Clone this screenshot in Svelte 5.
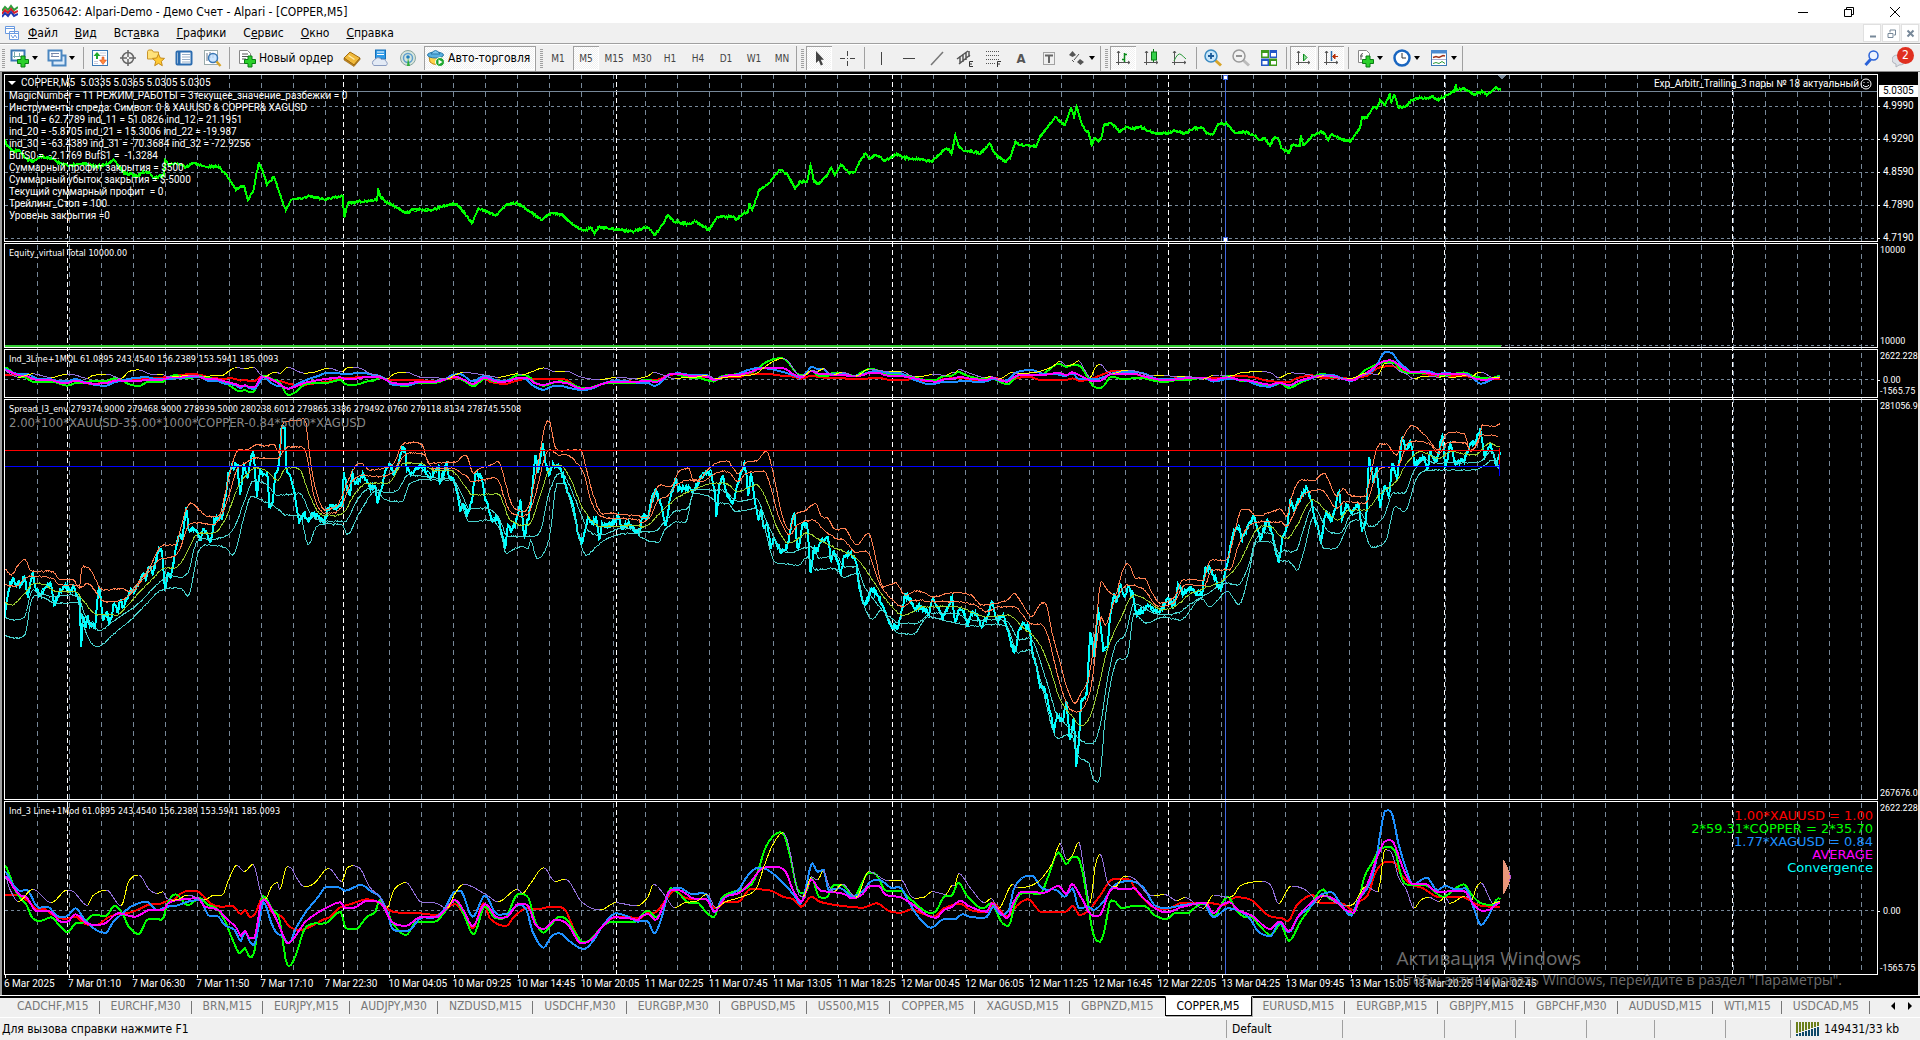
<script lang="ts">
  // Terminal window: menu, toolbars, five stacked chart panes, chart tabs, status bar.

  type Pt = [number, number];

  const W = 1872;
  const menu = [['', 'Ф', 'айл'], ['', 'В', 'ид'], ['Вст', 'а', 'вка'], ['', 'Г', 'рафики'], ['С', 'е', 'рвис'], ['', 'О', 'кно'], ['', 'С', 'правка']];
  const frames = ['M1', 'M5', 'M15', 'M30', 'H1', 'H4', 'D1', 'W1', 'MN'];
  const tabs = [
    'CADCHF,M15', 'EURCHF,M30', 'BRN,M15', 'EURJPY,M15', 'AUDJPY,M30', 'NZDUSD,M15', 'USDCHF,M30',
    'EURGBP,M30', 'GBPUSD,M5', 'US500,M15', 'COPPER,M5', 'XAGUSD,M15', 'GBPNZD,M15', 'COPPER,M5',
    'EURUSD,M15', 'EURGBP,M15', 'GBPJPY,M15', 'GBPCHF,M30', 'AUDUSD,M15', 'WTI,M15', 'USDCAD,M5',
  ];
  const activeTab = 13;
  const times = [
    '6 Mar 2025', '7 Mar 01:10', '7 Mar 06:30', '7 Mar 11:50', '7 Mar 17:10', '7 Mar 22:30', '10 Mar 04:05',
    '10 Mar 09:25', '10 Mar 14:45', '10 Mar 20:05', '11 Mar 02:25', '11 Mar 07:45', '11 Mar 13:05',
    '11 Mar 18:25', '12 Mar 00:45', '12 Mar 06:05', '12 Mar 11:25', '12 Mar 16:45', '12 Mar 22:05',
    '13 Mar 04:25', '13 Mar 09:45', '13 Mar 15:05', '13 Mar 20:25', '14 Mar 02:45',
  ];
  const comment = [
    'MagicNumber = 11 РЕЖИМ_РАБОТЫ = 3текущее_значение_разбежки = 0',
    'Инструменты спреда: Символ: 0 & XAUUSD & COPPER& XAGUSD',
    'ind_10 = 62.7789 ind_11 = 51.0826 ind_12 = 21.1951',
    'ind_20 = -5.8705 ind_21 = 15.3006 ind_22 = -19.987',
    'ind_30 = -63.4389 ind_31 = -70.3684 ind_32 = -72.9256',
    'BufS0 =  -2.1769 BufS1 =  -1.3284',
    'Суммарный профит закрытия = $500',
    'Суммарный убыток закрытия = $-5000',
    'Текущий суммарный профит  = 0',
    'Трейлинг_Стоп = 100',
    'Уровень закрытия =0',
  ];
  const gridX = Array.from({ length: 58 }, (_, i) => 32.5 + i * 32);
  const days = [62.5, 338.5, 611.5, 887.5, 1163.5, 1439.5, 1727.5];
  const priceAxis = [['4.9990', 31], ['4.9290', 64], ['4.8590', 97], ['4.7890', 130], ['4.7190', 163]] as [string, number][];

  // A block of recorded samples: x0 and k place it in time, y0 in the pane.
  function block(x0: number, k: number, y0: number, s: string): Pt[] {
    return s.trim().split(/\s+/).map((p) => {
      const [x, y] = p.split(',').map(Number);
      return [x0 - 5 + x / k, y0 + y / 3];
    });
  }

  const poly = (pts: Pt[]) => pts.map((p) => `${p[0].toFixed(1)},${p[1].toFixed(1)}`).join(' ');

  // Walk between the samples bar by bar with a small tick noise.
  function ticks(pts: Pt[], amp: number, seed: number): Pt[] {
    let r = seed;
    const rnd = () => ((r = (r * 16807) % 2147483647) / 2147483647) * 2 - 1;
    const out: Pt[] = [];
    for (let i = 1; i < pts.length; i++) {
      const [ax, ay] = pts[i - 1];
      const [bx, by] = pts[i];
      for (let x = ax; x < bx; x += 1) {
        out.push([x, ay + ((by - ay) * (x - ax)) / (bx - ax) + (x === ax ? 0 : rnd() * amp)]);
      }
    }
    out.push(pts[pts.length - 1]);
    return out;
  }

  // Averaged lines bend softly: cubic steps of two pixels between samples.
  function smooth(pts: Pt[]): Pt[] {
    const n = pts.length - 1;
    const slope = pts.map((_, i) => {
      const a = pts[Math.max(0, i - 1)];
      const b = pts[Math.min(n, i + 1)];
      const c = pts[i];
      if ((c[1] - a[1]) * (b[1] - c[1]) <= 0) return 0;
      return (b[1] - a[1]) / Math.max(1, b[0] - a[0]);
    });
    const out: Pt[] = [];
    for (let i = 0; i < n; i++) {
      const [ax, ay] = pts[i];
      const [bx, by] = pts[i + 1];
      const h = bx - ax;
      for (let x = ax; x < bx; x += 2) {
        const t = (x - ax) / h;
        const u = 1 - t;
        out.push([
          Math.round(x * 10) / 10,
          ay * u * u * (1 + 2 * t) + by * t * t * (3 - 2 * t) + h * t * u * (slope[i] * u - slope[i + 1] * t),
        ]);
      }
    }
    out.push(pts[n]);
    return out;
  }

  // Rising and falling parts of the convergence line have their own colours.
  function split(pts: Pt[], up: boolean): string {
    let d = '';
    for (let i = 1; i < pts.length; i++) {
      if (pts[i][1] <= pts[i - 1][1] === up) d += `M${pts[i - 1].join(' ')}L${pts[i].join(' ')}`;
    }
    return d;
  }

  const price = [
    ...block(0, 2.904, -75, '14,420 20,435 30,445 40,455 55,450 75,475 95,485 115,470 150,475 175,490 200,497 240,490 280,500 310,492 330,478 345,500 360,518 400,528 415,515 435,520 445,535 475,525 480,480 490,495 510,490 540,500 560,490 600,500 635,500 655,520 670,545 685,570 700,560 710,560 720,600 735,575 745,520 752,490 762,510 775,555 795,530 805,560 818,600 830,630 845,600 870,595 900,588 940,598 995,588 1000,650 1010,610 1050,605 1095,600 1098,565 1105,590 1120,605 1150,620 1180,640 1200,628 1250,632 1280,620 1325,612 1350,640 1370,670 1390,625 1440,645 1470,615 1500,610 1520,620'),
    ...block(530, 2.904, -75, '0,635 35,660 60,640 95,645 120,670 150,690 180,685 187,702 200,680 250,688 300,695 340,680 362,705 385,675 400,645 420,665 460,672 480,665 520,690 545,650 585,650 600,658 620,640 633,635 637,610 645,630 660,590 665,570 690,555 705,535 725,510 745,520 770,565 785,545 805,545 815,495 825,545 840,550 860,530 875,505 885,525 903,495 930,520 945,515 960,480 975,462 985,475 1005,465 1030,482 1065,462 1085,472 1140,480 1168,485 1175,475 1210,445 1225,460 1235,405 1245,440 1260,452 1310,460 1335,430 1350,462 1380,485 1395,470 1410,425 1420,435 1470,438 1480,412 1500,385 1525,352 1553,375 1567,335'),
    ...block(1060, 3, -75, '33,325 42,350 50,320 65,370 75,390 85,395 95,435 105,415 115,425 125,410 132,375 155,370 180,395 200,380 220,388 240,380 285,400 320,400 345,393 375,400 400,385 430,385 440,400 460,402 475,372 500,370 525,400 550,395 580,405 600,420 615,415 630,437 645,410 655,415 665,445 688,458 695,435 720,435 722,405 730,435 760,405 790,395 805,420 815,403 840,415 870,425 885,405 900,385 907,350 920,355 940,320 950,325 960,300 975,315 990,280 993,310 1003,285 1015,322 1035,322 1055,300 1085,292 1105,296 1115,288 1130,300 1155,290 1185,272 1187,252 1190,270 1210,265 1240,283 1270,275 1280,285 1310,262 1323,272'),
  ];

  const spreadBlocks = (a: string, b: string, c: string) => [
    ...block(0, 2.45, -60, a), ...block(640, 2.45, -60, b), ...block(1200, 2.178, -60, c),
  ];
  const spread = spreadBlocks(
    '12,830 20,755 32,712 38,735 45,725 50,738 60,712 68,775 80,695 88,750 98,765 110,745 118,730 125,735 133,795 145,760 160,742 168,745 172,760 180,740 190,770 195,778 199,920 203,830 210,865 215,825 220,860 228,848 232,865 243,738 253,840 262,815 268,852 280,790 288,820 295,780 302,800 318,755 330,755 340,730 352,700 358,720 365,680 375,700 390,625 397,632 404,745 412,700 418,715 430,630 440,580 447,600 456,500 462,570 480,570 490,600 500,565 515,610 525,540 545,530 560,400 570,380 582,375 588,465 598,370 606,415 620,330 625,400 630,465 638,390 645,405 655,400 660,500 668,485 675,400 683,375 690,262 697,262 702,385 720,450 733,550 745,520 755,540 770,520 795,550 803,505 820,500 840,490 842,395 852,450 858,465 863,395 872,430 890,402 905,440 920,440 924,490 935,445 945,390 955,370 965,400 975,375 985,325 993,330 997,390 1010,400 1030,375 1055,410 1075,380 1077,430 1095,370 1100,410 1115,430 1122,470 1128,515 1135,490 1145,525 1155,490 1165,400 1180,410 1190,480 1205,540 1220,535 1238,625 1245,555 1252,575 1265,545 1275,480 1285,590 1300,500 1312,345 1318,400 1330,310 1337,375 1345,405 1355,370 1375,390 1385,430 1392,460 1405,500 1415,580 1428,605 1440,530 1450,550 1460,530 1468,600 1475,550 1490,560 1515,530 1525,570 1540,545 1555,575 1567,575',
    '5,530 20,535 28,480 40,450 50,490 63,555 75,470 87,415 95,450 120,440 130,455 150,410 165,395 175,400 183,450 187,530 195,430 203,405 212,460 227,490 240,430 255,370 260,390 265,465 272,400 280,470 290,540 298,510 303,565 312,545 320,625 328,595 345,638 355,630 365,600 372,540 378,520 385,620 390,615 400,545 410,560 418,700 425,630 435,635 445,595 460,595 468,665 475,630 492,700 500,650 515,635 530,665 538,750 548,790 558,780 568,750 580,760 600,810 615,855 633,860 640,820 650,765 660,775 672,805 690,800 708,825 718,775 730,805 742,835 755,800 765,770 772,850 782,810 795,820 803,855 812,820 825,820 838,860 850,830 862,785 875,840 890,830 902,870 913,928 920,930 928,870 940,850 955,870 960,930 970,970 980,1040 990,1045 1000,1090 1015,1170 1022,1125 1035,1145 1045,1085 1053,1200 1063,1140 1069,1280 1075,1210 1080,1090 1095,1060 1103,875 1113,950 1122,800 1135,935 1145,925 1153,820 1162,760 1168,785 1178,735 1187,770 1195,740 1208,765 1215,820 1230,815 1245,795 1260,815 1275,815 1290,780 1310,795 1318,730 1330,765 1345,745 1360,755 1378,760 1385,680 1400,690 1415,735 1425,745 1437,680 1445,630 1455,570 1468,560 1475,600 1490,555 1505,530 1520,600 1535,545 1545,560 1555,620 1565,660',
    '180,590 190,560 197,480 205,515 212,490 220,470 232,440 242,480 250,540 258,570 263,605 275,510 285,545 295,505 303,455 310,540 318,490 330,520 345,490 353,570 362,540 368,350 378,430 385,385 392,505 402,435 412,465 418,370 430,410 440,290 450,330 458,300 468,375 485,350 497,385 500,340 515,365 528,285 535,380 545,310 555,370 575,360 590,310 600,305 610,265 620,350 632,310 645,375 655,335',
  );
  const bands = [
    { color: '#ff7f50', pts: spreadBlocks(
      '12,688 28,705 45,675 62,658 75,692 130,695 145,718 180,720 195,745 200,685 210,680 225,695 245,745 260,750 300,745 315,755 340,725 365,685 390,625 405,615 430,615 440,580 455,510 470,490 485,505 500,525 515,530 540,520 550,470 565,390 580,335 605,330 630,315 650,318 670,312 685,340 690,262 700,245 735,240 750,250 758,340 770,430 790,505 805,508 830,490 850,430 870,380 885,370 905,390 940,385 965,370 985,315 1000,310 1035,315 1050,370 1090,368 1120,365 1135,348 1145,350 1160,400 1175,385 1200,378 1220,365 1230,390 1250,480 1265,510 1295,500 1320,360 1340,245 1348,250 1360,320 1390,330 1425,330 1435,380 1450,450 1470,515 1500,520 1540,525 1567,528',
      '0,530 22,525 35,460 50,435 75,440 95,395 120,385 130,420 150,415 165,390 190,368 215,365 240,400 260,368 290,360 307,335 315,345 330,420 345,510 365,570 380,525 410,508 430,490 445,530 460,535 480,570 500,565 530,615 560,580 575,640 595,740 610,735 625,728 650,765 680,752 720,770 770,758 815,768 835,795 900,780 917,760 935,790 960,830 985,788 997,800 1010,880 1030,970 1045,1040 1067,1090 1080,1060 1100,1010 1115,880 1130,725 1145,750 1165,765 1180,700 1195,670 1215,715 1235,715 1255,760 1275,790 1310,770 1330,720 1380,720 1395,665 1440,655 1455,590 1470,515 1490,510 1510,528 1550,515 1565,508',
      '178,510 188,530 200,470 215,425 250,420 270,400 280,420 298,470 312,445 325,465 360,470 370,420 385,325 405,312 428,345 440,300 462,257 490,285 520,330 535,283 575,280 588,330 605,310 615,255 640,260 653,252') },
    { color: '#ff7f50', pts: spreadBlocks(
      '12,735 40,740 60,715 75,710 130,715 145,735 180,735 198,740 215,730 240,765 255,785 300,780 325,755 355,710 390,660 425,650 440,630 460,560 480,548 520,555 545,520 560,470 580,390 600,370 625,355 680,355 690,340 705,320 735,320 750,340 770,470 795,520 835,505 855,440 875,410 895,405 915,410 960,400 985,355 1000,340 1040,345 1060,385 1110,385 1130,400 1145,410 1155,425 1190,418 1220,420 1240,490 1260,525 1295,520 1315,450 1335,350 1350,330 1370,345 1390,345 1415,372 1430,400 1450,490 1475,530 1520,535 1567,540',
      '0,548 25,530 45,480 65,470 90,435 120,420 150,425 185,400 215,395 240,425 260,400 305,395 320,440 340,530 368,585 385,555 425,540 450,570 485,598 500,600 525,635 560,640 580,710 600,755 645,800 670,780 720,785 770,785 820,795 850,815 880,800 915,800 955,850 985,855 1000,890 1020,990 1045,1090 1067,1115 1085,1105 1105,1040 1120,900 1130,830 1140,855 1160,790 1195,735 1235,750 1270,800 1310,785 1335,735 1385,735 1400,690 1445,690 1465,620 1490,560 1530,545 1565,548',
      '178,545 188,560 205,520 225,465 265,450 298,505 315,485 360,490 385,400 405,380 430,380 450,315 465,303 500,312 520,340 540,308 580,310 590,335 615,285 650,288') },
    { color: '#9acd32', pts: spreadBlocks(
      '12,790 30,795 60,760 85,730 110,735 140,755 185,755 200,775 240,825 285,825 310,800 335,765 375,715 400,685 435,680 465,620 480,585 530,575 555,530 580,450 600,410 625,385 650,390 680,420 700,385 735,390 760,470 790,525 840,520 870,460 900,430 950,430 990,370 1030,370 1060,390 1110,395 1140,440 1160,465 1220,462 1250,540 1295,555 1320,480 1345,390 1370,375 1395,410 1430,510 1475,560 1567,555',
      '0,560 20,555 60,505 95,470 130,450 180,430 210,430 240,455 285,435 310,480 335,560 365,610 410,580 440,600 480,625 530,655 575,730 600,775 645,825 700,800 770,800 850,830 900,825 940,865 975,905 1000,970 1030,1080 1060,1130 1080,1158 1100,1135 1120,1060 1145,930 1180,830 1210,765 1240,780 1280,810 1310,800 1345,765 1380,745 1430,720 1470,665 1510,570 1545,560 1565,585',
      '178,590 190,595 210,560 245,480 280,520 300,540 325,510 360,510 390,465 430,420 450,370 480,335 520,355 545,335 600,345 630,310 653,320') },
    { color: '#48d1cc', pts: spreadBlocks(
      '12,835 60,830 80,750 95,760 130,770 192,772 210,830 245,872 270,850 300,825 340,790 375,745 410,710 460,700 480,610 520,598 550,590 575,560 600,480 620,425 650,430 680,465 735,460 760,520 795,545 845,545 875,480 905,445 950,458 975,450 1000,405 1070,415 1110,420 1130,460 1150,505 1190,505 1220,530 1245,590 1300,590 1325,570 1345,460 1370,400 1385,410 1420,510 1440,570 1475,585 1520,565 1567,570',
      '0,575 35,575 60,545 85,515 120,500 130,455 180,450 210,455 240,485 285,475 305,530 340,620 365,638 400,625 420,620 440,655 480,645 500,680 530,680 550,740 580,790 610,830 640,850 680,850 710,820 770,820 810,840 900,845 930,900 955,895 990,1000 1020,1120 1045,1155 1085,1205 1110,1210 1130,1140 1145,1020 1165,915 1190,880 1210,790 1240,810 1280,825 1325,815 1350,790 1385,765 1440,730 1465,735 1490,680 1510,595 1545,580 1565,640',
      '182,632 210,630 225,570 245,500 285,578 310,575 325,530 350,520 370,560 400,530 420,460 445,460 465,395 490,360 520,370 545,368 580,368 610,365 635,335 653,385') },
    { color: '#48d1cc', pts: spreadBlocks(
      '12,888 62,882 75,790 90,765 110,775 140,790 192,788 205,860 235,920 250,915 280,880 320,840 360,790 395,750 445,745 460,770 485,640 510,615 555,625 570,645 600,520 615,470 640,480 680,505 700,525 735,525 755,615 775,560 840,555 850,585 880,520 920,455 945,480 985,485 1005,430 1070,420 1110,420 1130,490 1150,545 1200,540 1225,570 1240,640 1275,620 1295,625 1300,600 1315,655 1345,600 1365,430 1380,430 1405,520 1435,645 1470,610 1510,585 1567,580',
      '0,590 45,608 60,570 90,545 115,540 130,460 170,470 195,490 215,490 235,515 285,505 305,560 325,655 350,670 390,675 410,650 430,690 475,685 500,712 530,700 550,800 570,838 590,810 635,880 675,878 705,830 740,840 775,850 820,858 900,862 925,938 955,930 985,1040 1010,1165 1025,1195 1055,1180 1075,1250 1100,1270 1112,1320 1127,1310 1140,1130 1165,970 1195,945 1210,820 1240,850 1280,832 1325,840 1375,775 1395,800 1440,755 1468,795 1490,710 1510,605 1545,605 1565,655',
      '178,662 195,665 212,690 225,640 248,530 270,625 300,620 325,550 350,540 372,620 405,600 425,500 445,515 470,420 485,395 530,390 600,390 620,375 640,360 653,390') },
  ];

  const indBlocks = (a: string, b: string, c: string) => smooth([
    ...block(0, 2.45, -22, a), ...block(640, 2.45, -22, b), ...block(1280, 2.45, -22, c),
  ]);
  const lines = [
    { color: '#ff0000', pts: indBlocks(
      '12,345 40,344 65,360 90,387 110,388 130,405 160,417 185,410 205,430 235,436 265,412 290,402 320,397 345,385 365,374 390,372 410,363 425,360 440,343 460,333 485,335 500,350 515,370 545,380 570,378 590,402 600,390 612,410 625,402 645,350 665,395 690,410 710,440 735,450 760,440 790,420 810,410 830,385 860,372 900,358 935,372 960,394 990,398 1030,400 1070,405 1085,395 1115,372 1135,400 1158,445 1185,370 1200,415 1240,438 1260,410 1290,385 1310,388 1355,380 1385,390 1400,430 1425,485 1445,482 1475,440 1500,415 1530,410 1565,415',
      '0,415 20,398 35,398 60,365 85,332 105,350 130,358 160,358 185,385 210,365 240,365 270,328 320,332 350,350 375,358 395,380 420,350 440,365 480,375 545,383 580,370 610,393 640,398 665,388 690,400 720,410 745,385 785,372 810,390 850,397 865,370 900,410 925,375 950,358 985,397 1040,397 1060,378 1077,405 1100,390 1125,350 1160,298 1200,300 1215,330 1255,380 1290,387 1330,368 1400,370 1430,375 1460,352 1500,362 1535,403 1565,413',
      '0,413 20,423 40,378 80,345 100,370 150,370 180,390 195,365 215,345 235,275 258,247 278,247 300,290 325,315 350,325 385,350 450,352 485,375 540,380') },
    { color: '#00ff00', pts: indBlocks(
      '12,258 25,290 35,325 50,355 65,375 80,415 100,422 125,412 145,435 165,457 185,430 205,427 230,405 260,408 280,377 300,400 315,440 340,462 360,420 385,417 400,415 410,370 430,343 460,375 490,355 510,375 530,385 550,420 570,480 588,520 600,505 612,532 625,505 640,360 648,350 665,385 685,420 700,540 708,558 725,525 745,450 765,432 800,428 835,395 845,440 870,447 900,410 920,395 930,360 950,400 965,435 995,465 1020,425 1065,425 1090,395 1113,360 1135,400 1160,463 1188,380 1215,415 1240,410 1270,342 1295,355 1310,420 1332,458 1350,435 1370,410 1390,420 1405,450 1430,487 1450,475 1475,440 1500,425 1540,425 1565,422',
      '0,410 20,392 40,412 60,370 75,325 95,340 120,368 140,368 160,393 180,412 200,355 230,335 250,330 275,310 290,270 305,210 325,170 345,157 355,170 370,240 385,325 405,340 420,293 440,352 460,350 470,320 495,315 525,350 540,320 560,278 580,285 600,330 640,333 665,360 700,395 720,398 745,350 765,345 780,308 800,345 840,385 860,370 885,425 903,438 920,365 940,338 980,342 1000,290 1025,217 1045,252 1060,230 1078,245 1095,350 1110,460 1127,485 1140,440 1150,370 1160,362 1180,385 1210,378 1240,380 1260,405 1290,417 1310,400 1340,400 1365,378 1385,370 1405,410 1440,350 1460,390 1480,410 1500,412 1520,440 1545,465 1565,435',
      '0,430 22,482 50,425 75,380 90,345 107,328 120,355 145,365 160,390 180,400 195,350 207,290 230,240 245,205 280,210 300,300 320,315 360,317 400,350 430,325 450,313 470,345 490,368 520,375 535,355 540,358') },
    { color: '#1e90ff', pts: indBlocks(
      '12,275 30,310 50,333 65,330 95,383 115,380 145,410 165,408 185,385 205,415 235,450 260,458 275,430 305,395 325,377 360,365 385,390 410,380 430,378 460,365 490,360 510,405 535,410 550,435 575,450 590,483 600,455 612,485 622,495 635,430 645,365 665,430 680,462 690,465 708,490 725,445 750,395 780,350 800,320 830,322 845,332 885,315 910,335 930,350 950,400 960,445 1000,452 1030,415 1065,412 1090,385 1115,335 1132,337 1158,410 1188,347 1215,400 1240,402 1270,375 1290,390 1305,455 1332,503 1350,470 1370,460 1400,488 1430,507 1455,480 1475,440 1510,400 1535,408 1565,425',
      '0,423 18,423 35,460 55,405 70,340 95,323 125,342 165,345 182,397 200,360 240,330 265,285 290,263 310,268 335,290 360,320 380,350 393,372 405,330 422,250 435,275 450,270 462,330 490,325 520,348 545,335 565,305 585,300 615,323 640,325 660,370 685,415 713,443 745,418 770,418 790,403 815,412 850,410 865,380 885,405 905,385 915,330 935,295 960,287 985,325 1020,330 1040,350 1060,325 1075,385 1100,380 1110,390 1135,365 1160,318 1200,303 1235,325 1260,375 1295,383 1330,375 1380,370 1405,412 1440,385 1490,410 1515,455 1545,468 1565,430',
      '0,430 22,457 45,410 75,380 100,345 127,337 145,365 175,407 190,365 220,310 235,245 247,150 258,92 275,103 290,190 310,270 325,313 360,293 385,330 405,318 430,328 455,325 475,385 492,435 510,410 525,375 540,365') },
    { color: '#ff00ff', pts: indBlocks(
      '12,290 35,325 50,347 65,352 90,393 120,393 150,425 165,425 185,403 210,428 235,435 260,428 290,400 330,410 350,400 365,390 400,390 412,370 435,360 485,355 500,378 535,390 550,410 580,445 590,468 600,452 612,475 622,475 640,365 648,360 670,400 685,440 705,490 720,475 745,430 770,405 800,383 835,367 845,385 870,382 900,362 935,372 960,425 995,437 1030,412 1070,412 1090,390 1115,360 1135,390 1158,438 1188,372 1215,410 1240,412 1270,372 1295,380 1310,430 1332,447 1360,420 1390,432 1425,490 1450,478 1475,440 1505,412 1540,415 1565,420',
      '0,412 20,402 38,420 55,385 75,330 100,332 130,355 165,360 182,395 210,350 240,340 265,315 295,270 320,260 355,272 375,330 395,365 420,298 440,330 465,335 500,342 520,355 545,343 560,320 585,318 600,343 640,353 670,375 700,403 725,413 745,390 765,380 785,362 805,378 850,395 862,370 885,400 900,415 915,368 935,335 990,338 1025,318 1045,342 1058,312 1080,350 1110,407 1130,400 1150,335 1165,325 1185,328 1210,325 1230,350 1265,387 1290,397 1330,380 1385,368 1405,400 1425,375 1445,367 1465,390 1500,408 1545,447 1565,425',
      '0,425 22,453 45,408 75,370 107,347 135,360 155,385 180,398 195,355 215,310 240,225 260,182 278,188 300,260 325,312 355,312 385,335 450,333 475,375 495,392 515,388 540,367') },
  ];
  const conv = indBlocks(
    '12,290 25,330 45,365 80,328 125,368 165,330 180,335 215,377 225,350 260,330 297,378 315,305 340,285 365,328 385,340 400,335 408,355 430,360 460,345 500,360 525,345 545,345 560,300 580,255 598,275 620,253 640,345 650,358 665,320 680,308 685,330 700,265 712,262 725,290 745,320 770,310 805,265 838,305 850,265 870,258 885,270 905,320 930,350 948,385 965,330 995,308 1020,350 1030,365 1070,370 1095,385 1115,340 1135,313 1190,343 1220,365 1268,328 1280,340 1300,310 1332,263 1360,305 1385,297 1425,365 1470,390 1510,368 1530,372 1560,378',
    '0,375 20,350 33,313 60,345 85,383 110,368 140,363 165,342 185,383 210,365 250,350 285,325 305,255 325,195 350,158 365,200 385,330 400,350 420,290 435,300 450,270 462,315 475,335 495,312 530,352 560,275 610,303 640,300 665,350 695,352 715,335 750,343 765,315 772,318 780,280 810,325 845,368 860,355 878,385 913,313 925,323 955,318 980,300 1010,250 1030,190 1045,240 1060,225 1075,185 1090,290 1103,370 1115,260 1128,222 1145,305 1165,320 1185,290 1210,295 1245,343 1290,345 1315,362 1335,353 1380,385 1405,345 1440,352 1455,345 1470,318 1515,305 1545,315 1565,372',
    '0,370 28,318 60,328 80,350 90,370 107,347 150,375 180,372 210,320 240,335 257,210 275,222 290,290 310,330 328,385 345,360 365,352 390,365 405,350 415,370 455,348 470,360 480,325 492,308 510,345 520,370 540,365',
  );

  // Icons, all on a 20x20 box.
  const axes = '<path d="M5.5 3v14M3 14.5h14M4 5l1.500-2 1.500 2M15 13l2 1.500-2 1.500" stroke="#555" fill="none"/>';
  const plus = '<path d="M11 8h4v3.500h3.500v4H15V19h-4v-3.500H7.500v-4H11z" fill="#2bd02b" stroke="#0a7d14"/>';
  const icons: Record<string, string> = {
    newChart: '<rect x="1.500" y="2.500" width="13" height="10" fill="#fff" stroke="#3a78b5" stroke-width="2"/><path d="M4.500 4v6M3 8.500h8M9.500 5v3" stroke="#7aa" fill="none"/>' + plus,
    profiles: '<rect x="5.500" y="7.500" width="13" height="10" fill="#dcebfa" stroke="#4a86c0" stroke-width="2"/><rect x="1.500" y="2.500" width="13" height="10" fill="#fff" stroke="#4a86c0" stroke-width="2"/><path d="M4 5.500h8M4 8.500h8M5 5v4" stroke="#78a"/>',
    market: '<rect x="2.500" y="2.500" width="15" height="15" fill="#fff" stroke="#3a78b5"/><path d="M10 5h6M10 7.500h6M4 13.500h4M4 15.500h4" stroke="#ccd"/><path d="M3.500 8L7 4l3.500 4H8v3H6V8z" fill="#1faa2a"/><path d="M16.500 12L13 16.500 9.500 12H12V9h2v3z" fill="#ff8a3a" stroke="#d03a1a" stroke-width=".5"/>',
    target: '<circle cx="10" cy="10" r="5.500" fill="none" stroke="#666" stroke-width="1.500"/><path d="M10 2v7M10 11v7M2 10h7M11 10h7" stroke="#666" stroke-width="1.500"/>',
    favor: '<path d="M1.500 3.500V11h11V4h-5L6 2H2.500z" fill="#ffe27a" stroke="#c9942a"/><path d="M12.500 6l1.800 4 4.200.4-3.200 3 1 4.300-3.800-2.300-3.800 2.300 1-4.300-3.200-3 4.200-.4z" fill="#ffc933" stroke="#c48a1a"/>',
    terminal: '<rect x="2.500" y="3.500" width="15" height="13" rx="1" fill="#fff" stroke="#2b6cb0" stroke-width="2"/><path d="M4 4h2.500v12H4z" fill="#2b6cb0"/><path d="M8 6.500h8M8 9h8M8 11.500h8M8 14h8" stroke="#9ab0c8"/>',
    tester: '<rect x="2.500" y="2.500" width="13" height="14" fill="#fff" stroke="#9aa"/><path d="M5 5v8M8 4v6M11 5v5" stroke="#678"/><circle cx="11" cy="10" r="4.500" fill="#bfe0ff" fill-opacity=".8" stroke="#3a78b5" stroke-width="1.500"/><path d="M14.500 13.500l4 4.500" stroke="#d8a52a" stroke-width="2.500"/>',
    order: '<path d="M2.500 2.500h8l3 3v10h-11z" fill="#fff" stroke="#888"/><path d="M5 6h6M5 8.500h6M5 11h4" stroke="#555"/>' + plus,
    book: '<path d="M2 10l6-6 10 6-6 7z" fill="#f0b93a" stroke="#a36d10"/><path d="M2 10v2l10 6.500 6-7V10l-6 7z" fill="#c98a1c" stroke="#8a5a0c" stroke-width=".6"/><path d="M6.500 7.500l6 4" stroke="#ffe9a8" stroke-width="1.500"/>',
    cloud: '<rect x="5.500" y="2" width="10" height="9" fill="#2f9be8" stroke="#1670b8"/><path d="M7 4h7M7 6.500h7" stroke="#fff"/><path d="M4 17.500a3 3 0 0 1 .5-5.500 4 4 0 0 1 7-.5 3.200 3.200 0 0 1 4.500 2 2.200 2.200 0 0 1 0 4z" fill="#e3eaf5" stroke="#8a9cc0"/>',
    signal: '<circle cx="10" cy="10" r="7.500" fill="#d7e6dc" stroke="#8aa6a0"/><circle cx="10" cy="10" r="4.500" fill="none" stroke="#5f9fd0" stroke-width="1.500"/><circle cx="10" cy="9" r="1.800" fill="#1f7fc0"/><path d="M10 10l2 8h-3z" fill="#2fae3a"/>',
    expert: '<path d="M3 8h13l-1 6q-5 5-11 0z" fill="#ffd24a" stroke="#c08a14"/><ellipse cx="9.500" cy="7" rx="8" ry="3" fill="#59b0e0" stroke="#2878a8"/><path d="M5 6q4.500-7 9 0z" fill="#7cc6f0" stroke="#2878a8"/><circle cx="14" cy="14" r="4.500" fill="#20a830" stroke="#fff"/><path d="M12.500 11.500l4 2.500-4 2.500z" fill="#fff"/>',
    cursor: '<path d="M7 3v12l2.800-2.500 2 5 2.200-1-2.200-4.700H15z" fill="#444"/>',
    cross: '<path d="M10.500 3v5M10.500 13v5M3 10.500h5M13 10.500h5M10 10.500h1" stroke="#444"/>',
    vline: '<path d="M10.500 4v13" stroke="#444"/>',
    hline: '<path d="M4 10.500h12" stroke="#444"/>',
    trend: '<path d="M4 17L16 4" stroke="#777" stroke-width="1.500"/>',
    channel: '<path d="M2 11L13 3M4 16L15 7M5 8v7M8 6v8M11 4v8M14 3v6" stroke="#555" stroke-width="1.500"/><path d="M18 13.500h-3.500v5H18M14.500 16H17" stroke="#333" fill="none"/>',
    fibo: '<path d="M3 3.500h14M3 7.500h14M3 11.500h14M3 15.500h9" stroke="#555" stroke-dasharray="1 1"/><path d="M18 13.500h-3.500V19M14.500 16H17" stroke="#333" fill="none"/>',
    label: '<rect x="4.500" y="4.500" width="11" height="12" fill="none" stroke="#555" stroke-dasharray="1 1"/><path d="M6 7.500h8M10 8v7" stroke="#666" stroke-width="2"/>',
    arrows: '<path d="M2 7l3.500-4L9 7 5.500 9zM10 14l3-3 4 3-3.500 3z" fill="#555"/><path d="M5 12l2 2M12 6l-5 6" stroke="#555"/>',
    bars: axes + '<path d="M11.500 5v9M9 11.500h2.500M11.500 6.500H14" stroke="#0a8a1a" stroke-width="1.500"/>',
    candles: axes + '<path d="M12.500 1v13" stroke="#0a7a14"/><rect x="10.500" y="4" width="5" height="8" fill="#34d04a" stroke="#0a7a14"/>',
    curve: axes + '<path d="M5 13q4-9 7-6.500T17 11" stroke="#2a9a3a" fill="none"/>',
    zoomIn: '<path d="M12.500 12.500l5.500 5" stroke="#d8a52a" stroke-width="3"/><circle cx="8" cy="8" r="6" fill="#c8e6fa" stroke="#3a8ac0" stroke-width="1.500"/><path d="M8 5v6M5 8h6" stroke="#1a5a98" stroke-width="1.800"/>',
    zoomOut: '<path d="M12.500 12.500l5.500 5" stroke="#bbb" stroke-width="3"/><circle cx="8" cy="8" r="6" fill="#f2f2f2" stroke="#999" stroke-width="1.500"/><path d="M5 8h6" stroke="#888" stroke-width="1.800"/>',
    tile: '<path d="M2 2h8v8H2zM10 10.500h8V18h-8z" fill="#3c9a1c"/><path d="M10.500 2H18v8h-7.500zM2 10.500h8V18H2z" fill="#2458c8"/><path d="M3.500 5h5v3.500h-5zM12 5h5v3.500h-5zM3.500 13h5v3.500h-5zM12 13h5v3.500h-5z" fill="#fff"/>',
    scroll: axes + '<path d="M10.500 6l3.500 3.500-3.500 3.500z" fill="#8fe09a" stroke="#0a8a1a"/>',
    shift: axes + '<path d="M10.500 3v10" stroke="#2a6aa8" stroke-width="1.500"/><path d="M17 8.500h-5M14 6l-2.500 2.500L14 11z" fill="#b8320a" stroke="#b8320a"/>',
    indi: '<path d="M3.500 2.500h8l3 3v9h-11z" fill="#fff" stroke="#888"/><path d="M8 5.500q-2 0-2 2V12M5 8h3" stroke="#555" fill="none"/>' + plus,
    clock: '<circle cx="10" cy="10" r="7.500" fill="#fff" stroke="#1a66c0" stroke-width="2.500"/><path d="M10 5v5h4" stroke="#333" fill="none"/>',
    template: '<rect x="2.500" y="2.500" width="15" height="15" fill="#fff" stroke="#3a78b5"/><path d="M2 2h16v3.500H2z" fill="#4a8ad0"/><path d="M4 9.500l3-1 3 1 4-2 2 .5" stroke="#a0341a" stroke-width="1.500" fill="none"/><path d="M3 11.500h14" stroke="#aac"/><path d="M4 15.500l3-1 3 1 3-2 3 2" stroke="#2a9a3a" fill="none"/>',
    search: '<path d="M8.500 11.500L3.500 17" stroke="#2a62d8" stroke-width="3"/><circle cx="11.500" cy="7.500" r="4.500" fill="#eef4ff" stroke="#2a62d8" stroke-width="1.500"/>',
  };
  const stdTools = ['market', 'target', 'favor', 'terminal', 'tester'];
  const trade = ['book', 'cloud', 'signal'];
  const draw = ['vline', 'hline', 'trend', 'channel', 'fibo', 'text', 'label'];
  const statusCells = ['profile', 'date', 'open', 'high', 'low', 'close', 'volume'];
</script>

{#snippet icon(name: string)}
  <svg class="icon" viewBox="0 0 20 20">{@html icons[name]}</svg>
{/snippet}

{#snippet tool(name: string, on = false)}
  <button class="tool" class:on aria-label={name}>
    {#if name === 'text'}<b>A</b>{:else}{@render icon(name)}{/if}
  </button>
{/snippet}

{#snippet drop(name: string)}
  <button class="tool drop" aria-label={name}>{@render icon(name)}<i class="caret"></i></button>
{/snippet}

{#snippet indicator()}
  <svg class="plot-svg" viewBox="0 0 {W} 172" preserveAspectRatio="none">
    <path class="grid h" d="M0 108.5H{W}" />
    {#each lines as l}
      <polyline points={poly(l.pts)} stroke={l.color} stroke-width="2" />
    {/each}
    <path d={split(conv, true)} stroke="#ffff00" />
    <path d={split(conv, false)} stroke="#9370db" />
  </svg>
{/snippet}

<div class="window">
  <header class="title">
    <svg width="16" height="16" viewBox="0 0 16 16" fill="none" stroke-width="2">
      <path d="M0 7l3-4 3 3 3-4 3 4 4-3" stroke="#2e9e3a" /><path d="M0 10l3-4 3 3 3-4 3 4 4-2" stroke="#d8202a" />
      <path d="M0 13l3-4 3 3 3-4 3 4 4-2" stroke="#2038b0" />
    </svg>
    <span>16350642: Alpari-Demo - Демо Счет - Alpari - [COPPER,M5]</span>
    <div class="winbtns">
      <button aria-label="Свернуть"><svg width="12" height="12"><path d="M1 6.500h10" /></svg></button>
      <button aria-label="Развернуть"><svg width="12" height="12"><path d="M1.500 3.500h7v7h-7zM3.500 3V1.500h7v7H9" /></svg></button>
      <button aria-label="Закрыть"><svg width="12" height="12"><path d="M1 1l10 10M11 1L1 11" /></svg></button>
    </div>
  </header>

  <nav class="menu">
    <svg width="14" height="14" viewBox="0 0 14 14" fill="#fff" stroke="#6a9ae0">
      <path d="M.5.5h9v7h-9zM.5 2.500h9M4.500 5.500h9v8h-9zM4.500 7.500h9" /><path d="M6 9l2 3 2-3 2 3" fill="none" />
    </svg>
    {#each menu as m}<button>{m[0]}<u>{m[1]}</u>{m[2]}</button>{/each}
    <div class="mdi">
      <button aria-label="Свернуть окно"><svg width="9" height="9"><path d="M2 7.500h6" stroke-width="2" /></svg></button>
      <button aria-label="Восстановить окно"><svg width="9" height="9"><path d="M1 4.500h5v4H1zM3 3.500V1h5.500v5H7" /></svg></button>
      <button aria-label="Закрыть окно"><svg width="9" height="9"><path d="M1.500 1.500l6 6M7.500 1.500l-6 6" stroke-width="2" /></svg></button>
    </div>
  </nav>

  <div class="toolbar">
    <i class="grip first"></i>
    {@render drop('newChart')}
    {@render drop('profiles')}
    <i class="sep"></i>
    {#each stdTools as t}{@render tool(t)}{/each}
    <i class="sep"></i>
    <button class="wide order">{@render icon('order')}Новый ордер</button>
    {#each trade as t}{@render tool(t)}{/each}
    <button class="wide auto on">{@render icon('expert')}Авто-торговля</button>
    <i class="grip"></i>
    {#each frames as f}<button class="tool frame" class:on={f === 'M5'}>{f}</button>{/each}
    <i class="grip"></i>
    {@render tool('cursor', true)}
    {@render tool('cross')}
    <i class="sep"></i>
    {#each draw as t}{@render tool(t)}{/each}
    {@render drop('arrows')}
    <i class="grip"></i>
    {@render tool('bars', true)}
    {@render tool('candles')}
    {@render tool('curve')}
    <i class="sep"></i>
    {@render tool('zoomIn')}
    {@render tool('zoomOut')}
    {@render tool('tile')}
    <i class="sep"></i>
    {@render tool('scroll', true)}
    {@render tool('shift', true)}
    <i class="sep"></i>
    {@render drop('indi')}
    {@render drop('clock')}
    {@render drop('template')}
    <i class="end"></i>
    <div class="right">
      {@render tool('search')}
      <button class="tool bubble" aria-label="Сообщения">
        <svg width="22" height="22" viewBox="0 0 22 22"><path d="M0 13q0-5 6-5t8 5q-1 5-7 5l-3 2v-3q-4-1-4-4" fill="#dfe2e8" stroke="#b0b4bc" /></svg>
        <span class="badge">2</span>
      </button>
    </div>
  </div>

  <main class="chart">
    <div class="panes">
      <svg class="back" viewBox="0 0 {W} 901" preserveAspectRatio="none">
        {#each gridX as x}<path class="grid" d="M{x} 0V901" />{/each}
        {#each days as x}<path class="day" d="M{x} 0V901" />{/each}
        <path d="M1220.5 3V901" stroke="#4169e1" />
      </svg>

      <section class="pane price">
        <div class="plot">
          <svg class="plot-svg" viewBox="0 0 {W} 166" preserveAspectRatio="none">
            {#each priceAxis as [, y]}<path class="grid h" d="M0 {y + 0.5}H{W}" />{/each}
            <path d="M0 16.5H{W}" stroke="#778899" />
            <polyline points={poly(ticks(price, 2, 7))} stroke="#00ff00" />
            <polyline points={poly(ticks(price, 1, 91))} stroke="#00ff00" stroke-width="2" />
            <path d="M1492 0h9l-4 4z" fill="#778899" stroke="none" />
            <path d="M1218.5 .5h4v4h-4zM1218.5 162.500h4v4h-4z" fill="#fff" stroke="#4169e1" />
          </svg>
          <p class="head"><i class="caret"></i><span>COPPER,M5&nbsp; 5.0335 5.0365 5.0305 5.0305</span></p>
          {#each comment as c}<p class="cmt">{c}</p>{/each}
          <p class="expert">Exp_Arbitr_Trailing_3 пары № 18 актуальный<svg width="12" height="12" viewBox="0 0 12 12" fill="none" stroke="#fff"><circle cx="6" cy="6" r="5" /><path d="M4 4v1M8 4v1M3 7q3 3.500 6 0" /></svg></p>
        </div>
        <div class="axis">
          {#each priceAxis as [t, y]}<span class="tick" style="top: {((y + 1) / 168) * 100}%">{t}</span>{/each}
          <span class="tick now">5.0305</span>
        </div>
      </section>

      <section class="pane equity">
        <div class="plot">
          <svg class="plot-svg" viewBox="0 0 {W} 103" preserveAspectRatio="none">
            <path class="grid h" d="M0 101.500H{W}" />
            <path d="M0 102H1496" stroke="#32cd32" stroke-width="2" />
          </svg>
          <p class="head sub">Equity_virtual Total 10000.00</p>
        </div>
        <div class="axis ends"><span>10000</span><span>10000</span></div>
      </section>

      <section class="pane mql">
        <div class="plot">
          {@render indicator()}
          <p class="head sub">Ind_3Line+1MQL 61.0895 243.4540 156.2389 153.5941 185.0093</p>
        </div>
        <div class="axis ends"><span>2622.228</span><span>-1565.75</span><span class="tick zero">0.00</span></div>
      </section>

      <section class="pane spread">
        <div class="plot">
          <svg class="plot-svg" viewBox="0 0 {W} 399" preserveAspectRatio="none">
            <polyline points={poly(ticks(spread, 3, 17))} stroke="#00ffff" stroke-width="2" />
            <polyline points={poly(ticks(spread, 3, 233))} stroke="#00ffff" />
            {#each bands as b}<polyline points={poly(ticks(smooth(b.pts), 1, 5))} stroke={b.color} />{/each}
            <path d="M0 50.500H1495M1494.500 48V66" stroke="#ff0000" />
            <path d="M0 66.500H1495M1494.500 64V76" stroke="#0000ff" />
          </svg>
          <p class="head sub">Spread_I3_env 279374.9000 279468.9000 278939.5000 280238.6012 279865.3386 279492.0760 279118.8134 278745.5508</p>
          <p class="formula">2.00*100*XAUUSD-35.00*1000*COPPER-0.84*5000*XAGUSD</p>
        </div>
        <div class="axis ends"><span>281056.9</span><span>267676.0</span></div>
      </section>

      <section class="pane mod">
        <div class="plot">
          {@render indicator()}
          <svg class="plot-svg" viewBox="0 0 {W} 172" preserveAspectRatio="none">
            <path d="M1498 57q5 7 8 18-3 12-8 18z" fill="#e9967a" stroke="none" />
            <path d="M1504 71l2 4-2 4" stroke="#ba55d3" />
          </svg>
          <p class="head sub">Ind_3 Line+1Mod 61.0895 243.4540 156.2389 153.5941 185.0093</p>
          <div class="legend">
            <p class="red">1.00*XAUUSD = 1.00</p>
            <p class="lime">2*59.31*COPPER = 2*35.70</p>
            <p class="blue">1.77*XAGUSD = 0.84</p>
            <p class="mag">AVERAGE</p>
            <p class="cyan">Convergence</p>
          </div>
        </div>
        <div class="axis ends"><span>2622.228</span><span>-1565.75</span><span class="tick zero">0.00</span></div>
      </section>
    </div>

    <div class="times">
      {#each times as t}<span>{t}</span>{/each}
    </div>

    <div class="watermark">
      <p class="big">Активация Windows</p>
      <p>Чтобы активировать Windows, перейдите в раздел "Параметры".</p>
    </div>
  </main>

  <nav class="tabs">
    {#each tabs as t, i}<button class:active={i === activeTab} class:before={i === activeTab - 1}>{t}</button>{/each}
    <div class="nav">
      <button aria-label="Влево"><i class="arrow left"></i></button>
      <button aria-label="Вправо"><i class="arrow"></i></button>
    </div>
  </nav>

  <footer class="status">
    <span class="help">Для вызова справки нажмите F1</span>
    {#each statusCells as c, i}<span class="cell {c}">{i === 0 ? 'Default' : ''}</span>{/each}
    <span class="cell net">
      <svg width="24" height="14" viewBox="0 0 24 14">
        {#each Array(8) as _, i}
          <path d="M{i * 3 + 1} 0V{11 - i}" stroke="#6b7f1a" stroke-width="2" />
          <path d="M{i * 3 + 1} {12 - i}V14" stroke="#0f4a6a" stroke-width="2" />
        {/each}
      </svg>
      149431/33 kb
    </span>
  </footer>
</div>

<style>
  :global(body) { margin: 0; }
  .window {
    min-height: 100vh; display: flex; flex-direction: column; background: #f0f0f0; color: #000;
    font-family: 'DejaVu Sans Condensed', 'Noto Sans', sans-serif; font-size: 12px; overflow: hidden;
  }
  p { margin: 0; }
  button { font: inherit; color: inherit; border: 0; background: none; padding: 0; margin: 0; white-space: nowrap; }

  .title { height: 23px; background: #fff; display: flex; align-items: center; gap: 5px; padding: 0 2px; }
  .winbtns { margin-left: auto; display: flex; }
  .winbtns button { width: 46px; height: 22px; display: flex; align-items: center; justify-content: center; }
  .winbtns svg, .mdi svg { fill: none; stroke: #000; }

  .menu { height: 20px; display: flex; align-items: center; gap: 17px; padding-left: 5px; border-bottom: 1px solid #a0a0a0; }
  .menu > svg { margin-right: -8px; }
  .mdi { margin-left: auto; display: flex; gap: 1px; padding-right: 1px; }
  .mdi button { width: 18px; height: 18px; box-sizing: border-box; background: #fff; border: 1px solid #e0e0e0; display: flex; align-items: center; justify-content: center; }
  .mdi svg { stroke: #778899; }

  .toolbar { height: 26px; display: flex; align-items: center; border-top: 1px solid #fff; border-bottom: 1px solid #888; padding: 0; }
  .tool { width: 28px; height: 24px; flex: none; display: flex; align-items: center; justify-content: center; }
  .tool.on, .auto {
    background: repeating-conic-gradient(#fff 0 25%, #f0f0f0 0 50%) 0 0 / 2px 2px;
    box-shadow: inset 1px 1px #a0a0a0, inset -1px -1px #fff;
  }
  .tool.on { width: 26px; margin: 0 1px; }
  .tool b { font-size: 13px; color: #555; }
  .drop { width: 37px; justify-content: flex-start; padding-left: 4px; box-sizing: border-box; }
  .drop .caret { margin-left: 2px; }
  .caret { border: 3px solid transparent; border-top: 4px solid #000; border-bottom: 0; }
  .icon { width: 20px; height: 20px; flex: none; }
  .frame { font-size: 10px; color: #444; }
  .wide { flex: none; display: flex; align-items: center; height: 24px; box-sizing: border-box; }
  .order { width: 106px; padding-left: 5px; gap: 2px; }
  .auto { width: 111px; margin-left: 2px; padding-left: 2px; gap: 2px; }
  .sep { width: 6px; height: 22px; flex: none; background: linear-gradient(#a0a0a0, #a0a0a0) 3px 0 / 1px 100% no-repeat; }
  .grip {
    width: 9px; height: 25px; flex: none; box-sizing: border-box;
    background: repeating-linear-gradient(#a0a0a0 0 1px, transparent 1px 2px) 4px 3px / 3px 19px no-repeat;
    border-left: 1px solid #a0a0a0;
  }
  .grip.first { width: 6px; border: 0; background-position: 2px 3px; }
  .end { width: 1px; height: 25px; background: #a0a0a0; }
  .right { margin-left: auto; display: flex; padding-right: 3px; gap: 3px; }
  .bubble { position: relative; }
  .badge {
    position: absolute; left: 8px; top: 1px; width: 17px; height: 17px; border-radius: 50%;
    background: #e03020; color: #fff; font-size: 12px; line-height: 17px; text-align: center;
  }

  .chart {
    flex: 1; display: flex; flex-direction: column; position: relative; background: #000; color: #fff;
    font-family: Roboto, sans-serif; font-size: 10px;
    border-left: 2px solid #a0a0a0; border-right: 2px solid #e3e3e3; padding: 2px 0 0 2px; overflow: hidden;
  }
  .panes { flex: 1; display: flex; flex-direction: column; gap: 1px; position: relative; }
  .back { position: absolute; left: 1px; top: 0; width: calc(100% - 42px); height: 100%; fill: none; shape-rendering: crispEdges; }
  svg path, svg polyline { vector-effect: non-scaling-stroke; }
  .grid { stroke: #778899; stroke-dasharray: 5 4; }
  .grid.h { stroke-dasharray: 3 3; }
  .day { stroke: #fff; stroke-dasharray: 5 3; }
  .pane { display: flex; min-height: 0; position: relative; flex-basis: 0; }
  .price { flex-grow: 168; }
  .equity { flex-grow: 105; }
  .mql { flex-grow: 49; }
  .spread { flex-grow: 401; }
  .mod { flex-grow: 174; }
  .plot { flex: 1; min-width: 0; position: relative; border: 1px solid #fff; overflow: hidden; }
  .plot-svg { position: absolute; inset: 0; width: 100%; height: 100%; fill: none; shape-rendering: crispEdges; }
  .plot p { position: relative; white-space: pre; line-height: 12px; padding-left: 4px; }
  .plot .head { display: flex; align-items: center; gap: 5px; padding: 2px 0 1px 3px; }
  .plot .sub { padding: 3px 0 0 4px; font-family: 'DejaVu Sans Condensed', sans-serif; font-size: 9px; }
  .head .caret { border-width: 4px; border-top-color: #fff; border-bottom: 0; }
  .plot .formula { font-family: 'DejaVu Sans Condensed', sans-serif; font-size: 13px; line-height: 16px; color: #888; }
  .plot .expert { position: absolute; right: 5px; top: 3px; display: flex; gap: 1px; }

  .axis { width: 40px; flex: none; position: relative; line-height: 12px; }
  .axis span { padding-left: 5px; white-space: nowrap; }
  .ends { display: flex; flex-direction: column; justify-content: space-between; padding: 1px 0; font-size: 9px; }
  .axis.ends span { padding-left: 2px; }
  .axis.ends .zero { padding-left: 5px; }
  .tick { position: absolute; left: 0; transform: translateY(-50%); }
  .tick::before { content: ''; position: absolute; left: 0; top: 6px; width: 2px; height: 1px; background: #fff; }
  .zero { top: 63%; }
  .axis .now { top: 10%; left: 1px; padding: 0 4px; background: #fff; color: #000; }

  .times { height: 20px; display: flex; line-height: 18px; white-space: nowrap; margin-right: 40px; }
  .times span { flex: 0 0 3.42%; position: relative; }
  .times span::before { content: ''; position: absolute; left: 1px; top: 0; width: 1px; height: 3px; background: #fff; }

  .watermark { position: absolute; right: 76px; bottom: 4px; color: #828282; opacity: .85; font-family: 'Open Sans', sans-serif; font-size: 14px; line-height: 22px; }
  .watermark .big { font-size: 19px; }
  .legend { position: absolute; right: 4px; top: 7px; font-family: 'DejaVu Sans', sans-serif; font-size: 13px; text-align: right; }
  .plot .legend p { line-height: 13px; }
  .red { color: #ff0000; }
  .lime { color: #00ff00; }
  .blue { color: #1e90ff; }
  .mag { color: #ff00ff; }
  .cyan { color: #00ffff; }

  .tabs { height: 21px; display: flex; align-items: flex-start; border-top: 1px solid #fff; box-shadow: inset 0 2px #000; padding-left: 6px; color: #777; border-bottom: 1px solid #fff; }
  .tabs > button { height: 20px; padding: 0 11px; position: relative; }
  .tabs > button::after { content: ''; position: absolute; right: 0; top: 5px; width: 1px; height: 13px; background: #777; }
  .tabs > .active { background: #fff; color: #000; border: 1px solid #000; border-top-color: #fff; box-sizing: border-box; box-shadow: 1px 1px #aaa; }
  .tabs > .active::after, .tabs > .before::after { display: none; }
  .nav { margin: 6px 8px 0 auto; display: flex; gap: 13px; }
  .arrow { display: block; border: 4px solid transparent; border-left-color: #000; border-right: 0; }
  .arrow.left { border: 4px solid transparent; border-right-color: #000; border-left: 0; }

  .status { height: 22px; display: flex; align-items: center; padding-left: 2px; }
  .help { flex: 1; }
  .cell { height: 18px; line-height: 18px; box-sizing: border-box; border-left: 1px solid #a0a0a0; padding-left: 5px; width: 71px; }
  .profile { width: 116px; }
  .date { width: 102px; }
  .low { width: 68px; }
  .volume { width: 65px; }
  .net { width: 130px; display: flex; align-items: center; gap: 4px; }
</style>
